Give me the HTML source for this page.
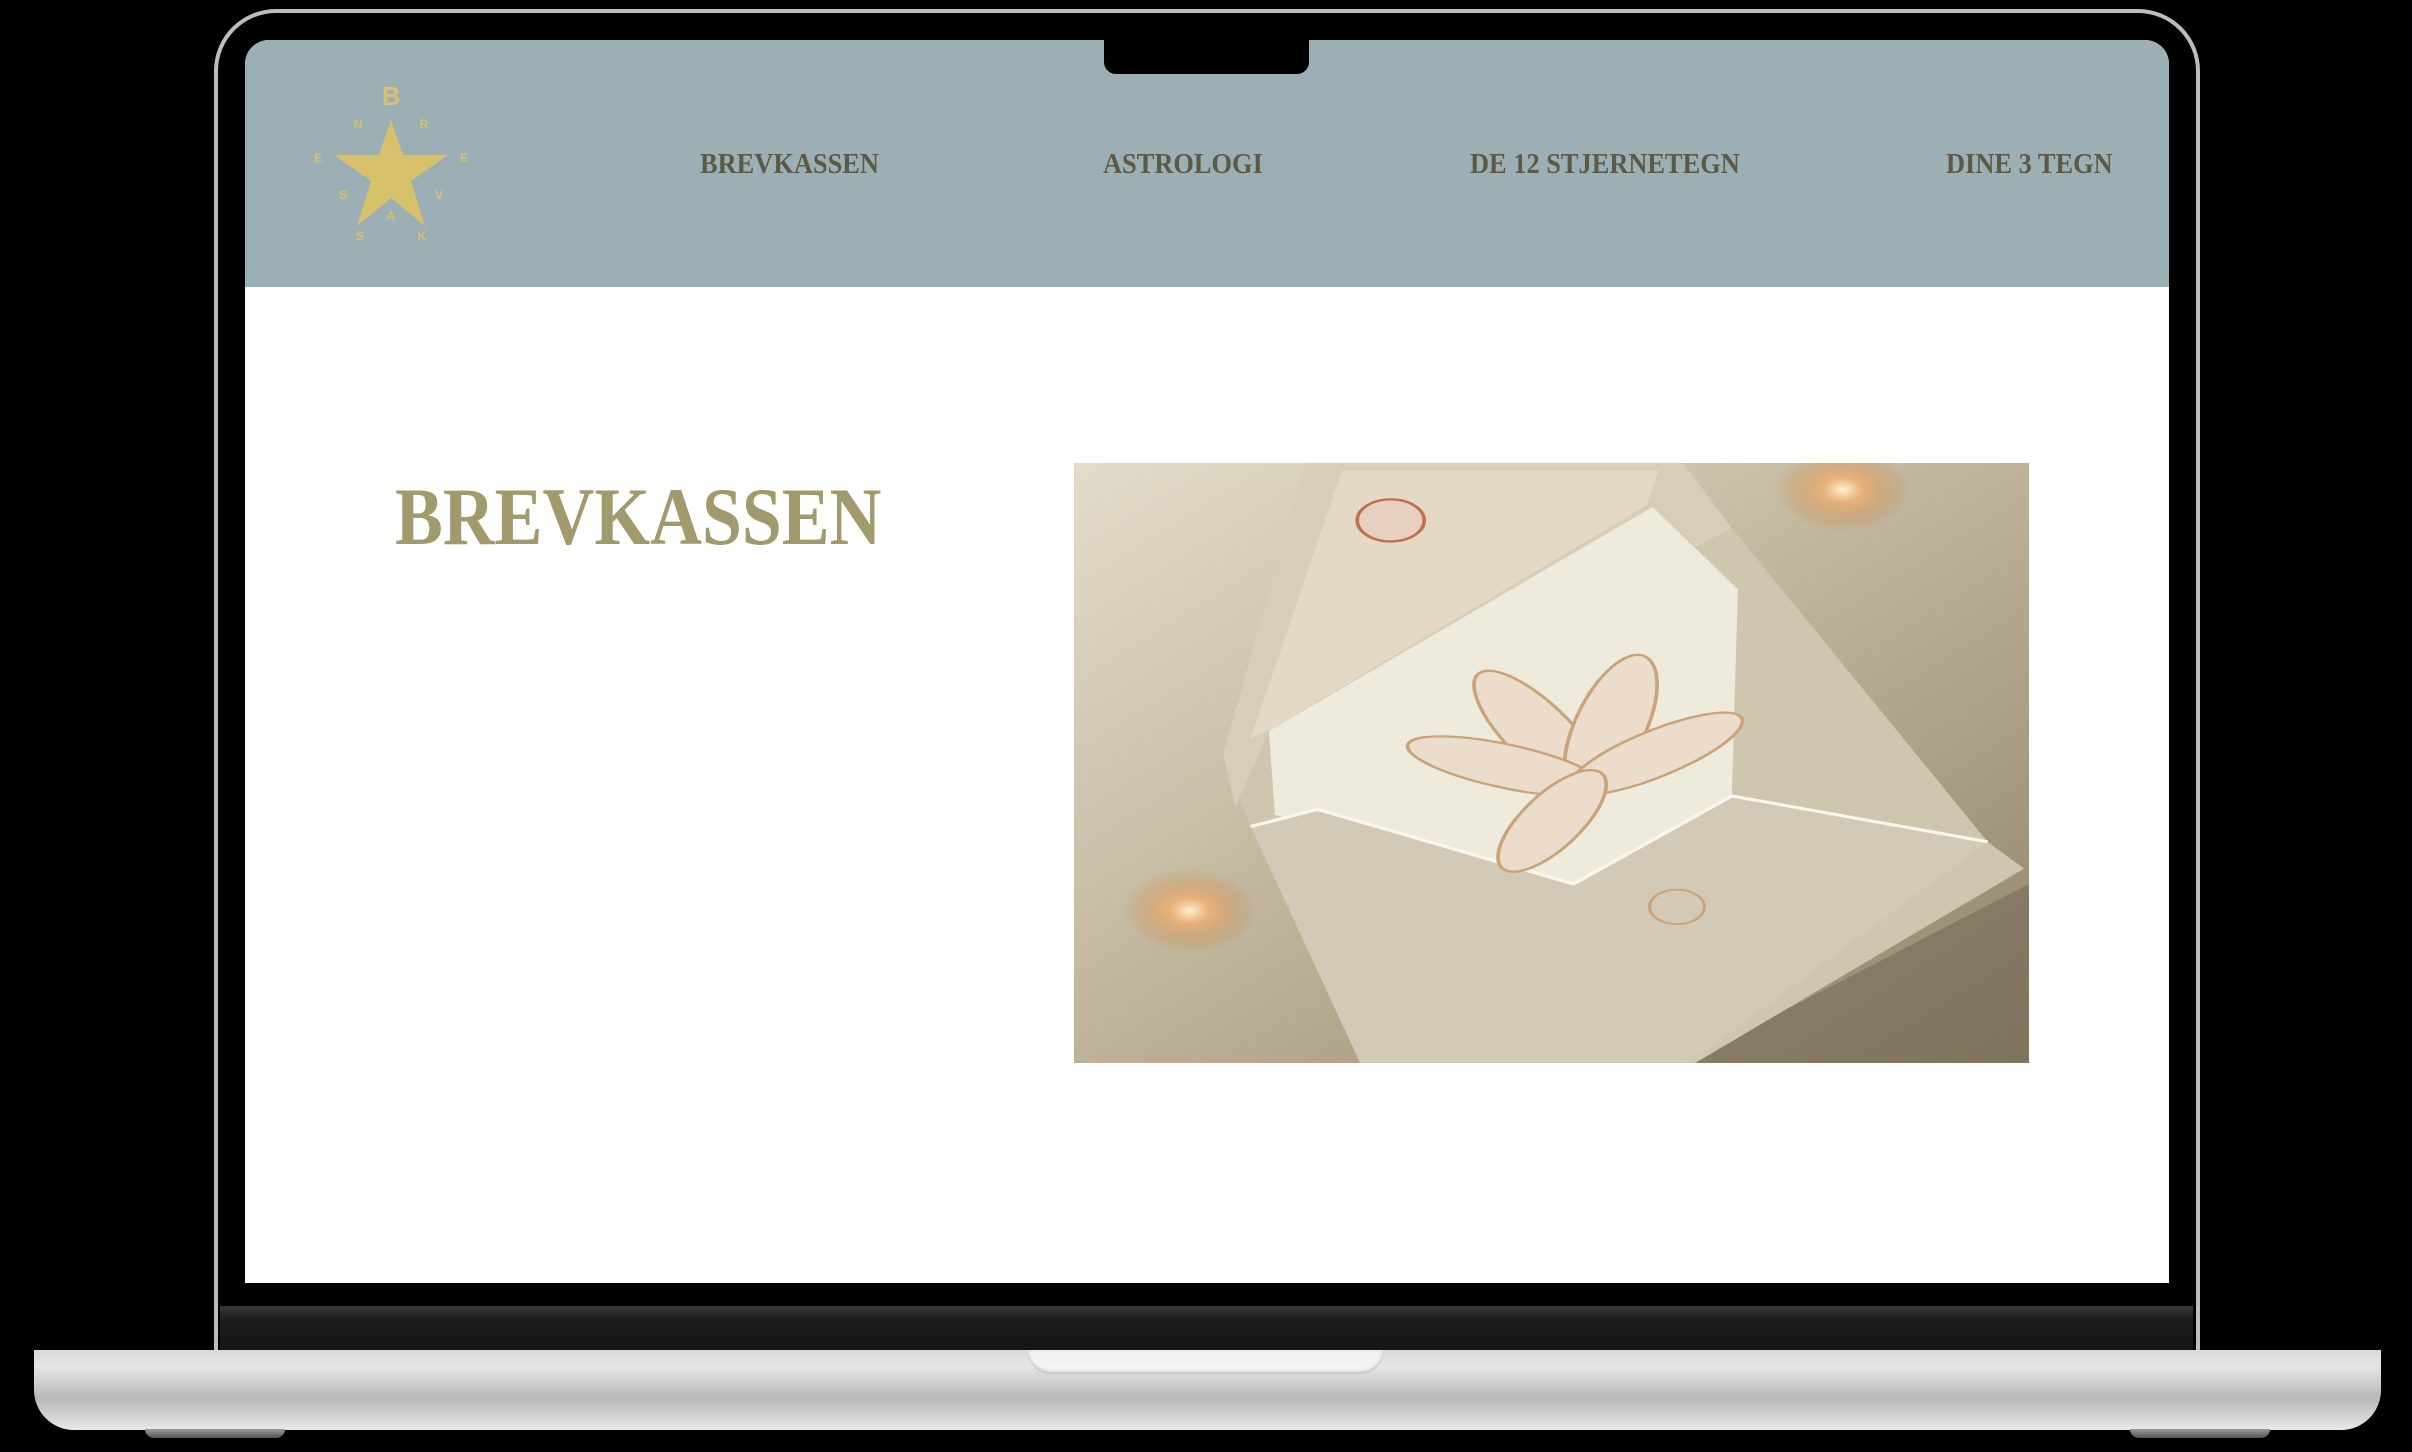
<!DOCTYPE html>
<html><head><meta charset="utf-8"><style>
*{margin:0;padding:0;box-sizing:border-box}
body{width:2412px;height:1452px;background:#000;position:relative;overflow:hidden;font-family:"Liberation Serif",serif}
.abs{position:absolute}
.frame{left:214px;top:9px;width:1986px;height:1345px;border-radius:62px 62px 0 0;border:4px solid #bdbdbd;border-bottom:none;background:#000}
.screen{left:245px;top:40px;width:1924px;height:1243px;background:#fff;border-radius:24px 24px 0 0;overflow:hidden}
.header{left:0;top:0;width:1924px;height:247px;background:#9cafb5}
.notch{left:1104px;top:40px;width:205px;height:34px;background:#000;border-radius:0 0 12px 12px}
.nav{position:absolute;top:110px;font-weight:bold;font-size:29px;color:#5c5a45;white-space:nowrap;transform:scaleX(.91);transform-origin:left center;line-height:1}
.bezel{left:220px;top:1306px;width:1973px;height:44px;background:linear-gradient(#3a3a3a,#1c1c1c 30%,#151515)}
.base{left:34px;top:1350px;width:2347px;height:80px;border-radius:0 0 40px 40px;background:linear-gradient(#d9d9db,#e6e6e8 20%,#b8b9bb 60%,#d5d6d8 85%,#e9e9ea)}
.hinge{left:1027px;top:1350px;width:357px;height:24px;background:linear-gradient(#eee,#f6f6f6);border-radius:0 0 24px 24px;box-shadow:inset 0 -2px 3px #bbb}
.foot{top:1429px;width:140px;height:9px;background:linear-gradient(#9a9a9a,#555);border-radius:0 0 10px 10px}
h1{position:absolute;left:150px;top:436px;font-size:82px;font-weight:bold;color:#a19a6c;line-height:1;transform:scaleX(.875);transform-origin:left center;white-space:nowrap}
</style></head><body>
<div class="abs frame"></div>
<div class="abs screen">
  <div class="abs header"></div>
  <svg class="abs" style="left:65px;top:42px" width="160" height="200" viewBox="0 0 160 200">
    <g fill="#d7c16b" font-family="Liberation Sans,sans-serif" font-weight="bold" text-anchor="middle">
      <text x="81" y="23" font-size="26">B</text>
      <polygon points="81,38 93,73 138,73 101,99 115,144 81,116 47,144 61,99 24,73 69,73"/>
      <text x="48" y="46" font-size="12">N</text>
      <text x="114" y="46" font-size="12">R</text>
      <text x="8" y="80" font-size="12">E</text>
      <text x="154" y="80" font-size="12">E</text>
      <text x="33" y="117" font-size="12">S</text>
      <text x="129" y="117" font-size="12">V</text>
      <text x="81" y="138" font-size="12">A</text>
      <text x="50" y="158" font-size="12">S</text>
      <text x="112" y="158" font-size="12">K</text>
    </g>
  </svg>
  <div class="nav" style="left:455px">BREVKASSEN</div>
  <div class="nav" style="left:858px">ASTROLOGI</div>
  <div class="nav" style="left:1225px">DE 12 STJERNETEGN</div>
  <div class="nav" style="left:1701px">DINE 3 TEGN</div>
  <h1>BREVKASSEN</h1>
  <svg class="abs" style="left:829px;top:423px" width="955" height="600" viewBox="0 0 1568 1568" preserveAspectRatio="none">
    <defs>
      <linearGradient id="bg" x1="0" y1="0" x2="1" y2="1">
        <stop offset="0" stop-color="#e4dccb"/><stop offset=".4" stop-color="#c7bca3"/><stop offset="1" stop-color="#8f8268"/>
      </linearGradient>
      <radialGradient id="gl"><stop offset="0" stop-color="#fff3d0"/><stop offset=".3" stop-color="#f0b070" stop-opacity=".8"/><stop offset="1" stop-color="#c08040" stop-opacity="0"/></radialGradient>
    </defs>
    <rect width="1568" height="1568" fill="url(#bg)"/>
    <polygon points="1000,1568 1568,1100 1568,1568" fill="#6e6450" opacity=".5"/>
    <polygon points="380,0 1000,0 1080,170 1500,990 1560,1060 1020,1568 470,1568 290,950 245,760" fill="#cfc6b0"/>
    <polygon points="380,0 1000,0 1080,170 1020,220 950,115 320,700 265,900 245,760" fill="#d8ceb8"/>
    <polygon points="440,20 960,20 940,110 330,690 290,720" fill="#e3d9c4"/>
    <polygon points="320,700 950,115 1090,330 1080,870 820,1100 330,920" fill="#efebdc"/>
    <polygon points="290,950 400,905 820,1100 1080,870 1500,990 1010,1568 470,1568" fill="#d2cab6"/>
    <polyline points="290,950 400,905 820,1100 1080,870 1500,990" fill="none" stroke="#faf6ea" stroke-width="8"/>
    <g transform="translate(840,840)" fill="#ebdccb" stroke="#c9a47a" stroke-width="6">
      <ellipse rx="60" ry="190" transform="rotate(-30) translate(0,-150)"/>
      <ellipse rx="60" ry="190" transform="rotate(15) translate(0,-160)"/>
      <ellipse rx="55" ry="170" transform="rotate(-70) translate(0,-140)"/>
      <ellipse rx="55" ry="170" transform="rotate(55) translate(0,-140)"/>
      <ellipse rx="55" ry="150" transform="rotate(-150) translate(0,-110)"/>
    </g>
    <circle cx="520" cy="150" r="55" fill="#e8d0c0" stroke="#c07050" stroke-width="6"/>
    <circle cx="990" cy="1160" r="45" fill="none" stroke="#c9a47a" stroke-width="5"/>
    <circle cx="190" cy="1170" r="110" fill="url(#gl)"/>
    <circle cx="1262" cy="70" r="110" fill="url(#gl)"/>
  </svg>
</div>
<div class="abs notch"></div>
<div class="abs bezel"></div>
<div class="abs base"></div>
<div class="abs hinge"></div>
<div class="abs foot" style="left:145px"></div>
<div class="abs foot" style="left:2130px"></div>
</body></html>
